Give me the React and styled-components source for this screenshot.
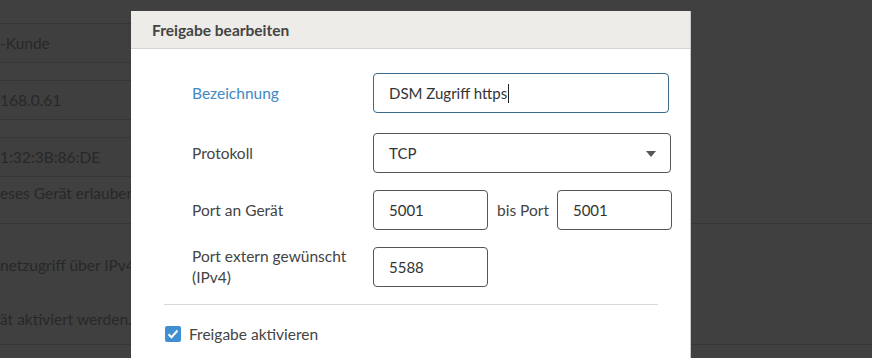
import React from "react";
import styled, { createGlobalStyle } from "styled-components";

const Global = createGlobalStyle`
  html, body { margin: 0; padding: 0; }
  body {
    width: 872px; height: 358px; overflow: hidden;
    background: #404040;
    font-family: Lato, "Open Sans", "Liberation Sans", sans-serif;
  }
`;

const Page = styled.div`
  position: relative;
  width: 872px;
  height: 358px;
  overflow: hidden;
  background: #404040;
`;

const Back = styled.div`
  display: flex;
  flex-direction: column;
  padding-top: 23px;
  color: #282828;
  font-size: 15.5px;
`;

const BackField = styled.div`
  width: 300px;
  height: 38px;
  border-top: 1px solid #363636;
  border-bottom: 1px solid #363636;
  background: #3f3f3f;
  display: flex;
  align-items: center;
  margin-bottom: ${(p) => p.$mb ?? 17}px;
  white-space: nowrap;
`;

const BackText = styled.div`
  height: ${(p) => p.$h}px;
  display: flex;
  align-items: center;
  white-space: nowrap;
`;

const BackSection = styled.div`
  border-top: 1px solid #363636;
  border-bottom: 1px solid #363636;
  height: 122px;
  display: flex;
  flex-direction: column;
  padding-top: 30px;
  box-sizing: border-box;
  gap: 32px;
`;

const Modal = styled.div`
  position: absolute;
  left: 131px;
  top: 11px;
  width: 560px;
  height: 360px;
  background: #fff;
  border-right: 1px solid #c8c8c8;
  box-sizing: border-box;
`;

const Header = styled.div`
  height: 37px;
  background: #edece8;
  border-bottom: 1px solid #d4d4d0;
  display: flex;
  align-items: center;
  padding-left: 21px;
`;

const Title = styled.h2`
  margin: 0;
  font-size: 15.5px;
  font-weight: 700;
  color: #444;
`;

const Body = styled.div`
  padding: 24px 32px 0 33px;
  display: flex;
  flex-direction: column;
`;

const Row = styled.div`
  display: flex;
  align-items: center;
  padding-left: 28px;
  margin-bottom: ${(p) => p.$mb}px;
`;

const Label = styled.label`
  width: 181px;
  flex: none;
  font-size: 15.5px;
  line-height: 21px;
  color: ${(p) => (p.$active ? "#4289c3" : "#444")};
`;

const Input = styled.div`
  box-sizing: border-box;
  flex: none;
  width: ${(p) => p.$w}px;
  height: 40px;
  border: 1px solid ${(p) => (p.$focus ? "#3a6b8c" : "#555")};
  border-radius: 4px;
  display: flex;
  align-items: center;
  padding-left: 15px;
  font-size: 15px;
  color: #333;
  position: relative;
`;

const Caret = styled.span`
  display: inline-block;
  width: 1px;
  height: 19px;
  background: #222;
  margin-left: 1px;
`;

const Arrow = styled.span`
  position: absolute;
  right: 14px;
  top: 17px;
  width: 0;
  height: 0;
  border-left: 5px solid transparent;
  border-right: 5px solid transparent;
  border-top: 6px solid #555;
`;

const Between = styled.span`
  flex: none;
  white-space: nowrap;
  font-size: 15.5px;
  color: #444;
  margin: 0 8px 0 9px;
`;

const Divider = styled.hr`
  margin: 0;
  border: none;
  border-top: 1px solid #d8d8d8;
`;

const CheckRow = styled.div`
  display: flex;
  align-items: center;
  padding-top: 20px;
  padding-left: 1px;
  gap: 8px;
  font-size: 15.5px;
  color: #444;
`;

const Box = styled.span`
  width: 16px;
  height: 16px;
  border-radius: 2px;
  background: #3f8fd2;
  display: flex;
  align-items: center;
  justify-content: center;
`;

export default function App() {
  return (
    <>
      <Global />
      <Page>
        <Back>
          <BackField>-Kunde</BackField>
          <BackField>168.0.61</BackField>
          <BackField $mb={0}>1:32:3B:86:DE</BackField>
          <BackText $h={32}>eses Gerät erlauben</BackText>
          <BackText $h={14} />
          <BackSection>
            <BackText $h={22}>netzugriff über IPv4</BackText>
            <BackText $h={22}>ät aktiviert werden.</BackText>
          </BackSection>
        </Back>
        <Modal>
          <Header>
            <Title>Freigabe bearbeiten</Title>
          </Header>
          <Body>
            <Row $mb={20}>
              <Label $active>Bezeichnung</Label>
              <Input $w={296} $focus>
                DSM Zugriff https<Caret />
              </Input>
            </Row>
            <Row $mb={17}>
              <Label>Protokoll</Label>
              <Input $w={298}>
                TCP
                <Arrow />
              </Input>
            </Row>
            <Row $mb={16}>
              <Label>Port an Gerät</Label>
              <Input $w={115}>5001</Input>
              <Between>bis Port</Between>
              <Input $w={115}>5001</Input>
            </Row>
            <Row $mb={16}>
              <Label>
                Port extern gewünscht
                <br />
                (IPv4)
              </Label>
              <Input $w={115}>5588</Input>
            </Row>
            <Divider />
            <CheckRow>
              <Box>
                <svg width="12" height="10" viewBox="0 0 12 10">
                  <path d="M1.5 5.2 L4.5 8.2 L10.5 1.5" fill="none" stroke="#fff" strokeWidth="2" />
                </svg>
              </Box>
              Freigabe aktivieren
            </CheckRow>
          </Body>
        </Modal>
      </Page>
    </>
  );
}
